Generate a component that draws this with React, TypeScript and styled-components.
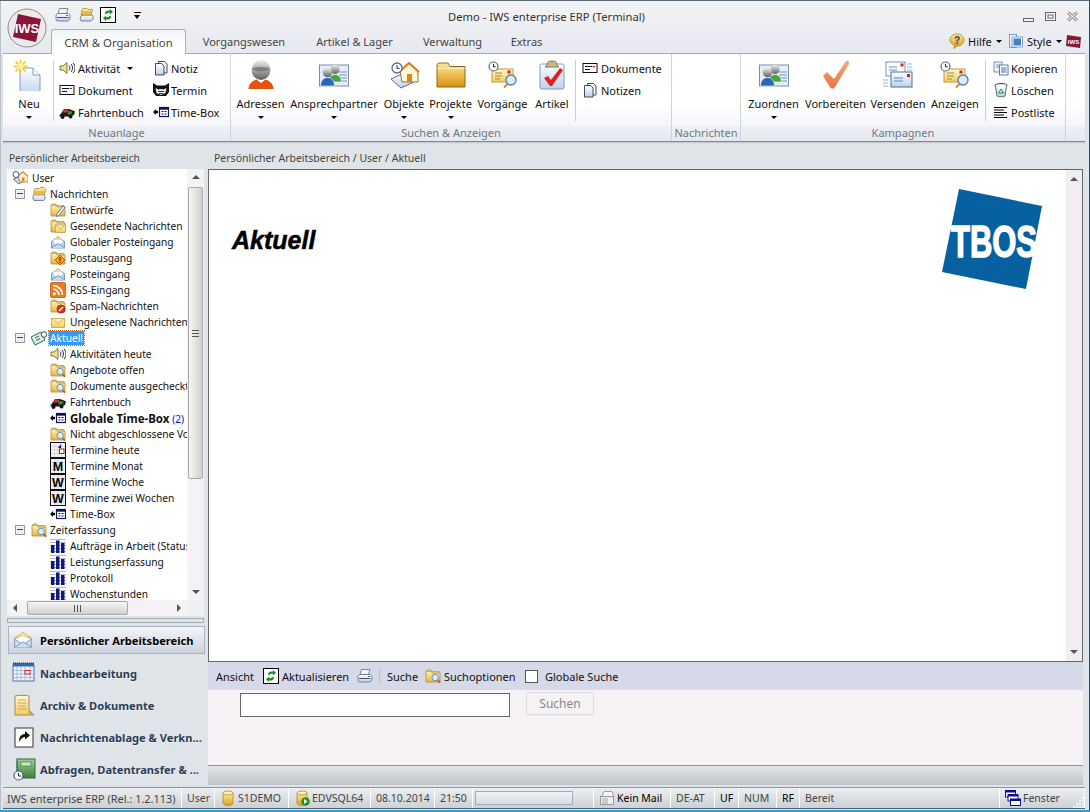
import React, { ReactNode } from "react";
import styled, { createGlobalStyle } from "styled-components";

const FONT = '"Noto Sans", "Liberation Sans", sans-serif';

const GlobalStyle = createGlobalStyle`
  html, body { margin: 0; padding: 0; overflow: hidden; background: #dfe4e8; }
  body { font-family: ${FONT}; font-size: 10.5px; color: #111; }
  * { box-sizing: border-box; }
`;

/* ---------- icons ---------- */
const S = { strokeWidth: 0.8 };
const folder = <path d="M1 5V3.2h5L7.2 5H15v9H1z" fill="url(#gFold)" stroke="#a98a3c" {...S} />;
const folderBack = <path d="M2 4V2h4l1 1.5h7V6H2z" fill="#f6e2a0" stroke="#b09a50" {...S} />;
const loupe = (
  <>
    <circle cx="10.2" cy="9.5" r="3.2" fill="#dcecfb" stroke="#6f8aa8" strokeWidth="1" />
    <path d="M12.5 12l2.6 2.8" stroke="#a8641c" strokeWidth="1.6" />
  </>
);
const env = (
  <>
    <rect x="1.5" y="4.5" width="13" height="9" fill="url(#gEnv)" stroke="#c9a040" {...S} />
    <path d="M1.5 4.5L8 9.5l6.5-5" fill="none" stroke="#d5a840" {...S} />
  </>
);
const envOpen = (
  <>
    <path d="M1.5 7.5L8 2.5l6.5 5V14h-13z" fill="#b8d0f0" stroke="#6488bc" {...S} />
    <path d="M3.5 6h9v3L8 11 3.5 9z" fill="#fff" />
    <path d="M1.5 14L8 9.5l6.5 4.5" fill="#c8daf2" stroke="#6488bc" {...S} />
    <path d="M3 6l5-3.500 5 3.500" fill="#f3d98a" />
  </>
);
const printer = (
  <>
    <path d="M4.5 1.5h8.5l-1.5 5H3z" fill="#f2f5fa" stroke="#5f6f85" {...S} />
    <path d="M2.5 6.5h11l1.5 1.5v4l-2 2H2l-1-2V8z" fill="url(#gBlue)" stroke="#5f6f85" {...S} />
    <path d="M2 10.5h11.5" stroke="#44566e" />
    <path d="M11 8.5h2.2" stroke="#3e6ea8" />
  </>
);
const arrows = (
  <>
    <path d="M5 7c0-3 2-4 5-3.500V2l3 2.800-3 2.700V6c-2-.4-3.200.2-3.500 1z" fill="#1b8f1b" />
    <path d="M11 9c0 3-2 4-5 3.500V14l-3-2.800 3-2.700V10c2 .4 3.200-.2 3.500-1z" fill="#1b8f1b" />
  </>
);
const cylinder = (
  <>
    <path d="M3 3v10c0 1.500 2.200 2.500 5 2.500s5-1 5-2.500V3z" fill="url(#gCyl)" stroke="#b48a20" {...S} />
    <ellipse cx="8" cy="3" rx="5" ry="2" fill="#fff2b8" stroke="#b48a20" {...S} />
  </>
);
const timeboxSmall = (
  <>
    <path d="M0 8l3-3v1.800h2v2.400H3V11z" fill="#000" />
    <rect x="6.500" y="3.500" width="9" height="9" fill="#fff" stroke="#10105e" strokeWidth="1.200" />
    <rect x="6.500" y="3.500" width="9" height="2.200" fill="#10105e" />
    <path d="M8.500 7.500h2M11.500 7.500h2M8.500 10h2M11.500 10h2" stroke="#10105e" />
  </>
);
const calLetter = (letter: string) => (
  <>
    <rect x=".5" y=".5" width="15" height="15" fill="#f4f4f4" stroke="#111" />
    <path d="M1 4.500h14M1 8h14M1 11.500h14M4.500 1v14M8 1v14M11.500 1v14" stroke="#c4c4c4" strokeWidth=".6" />
    <text x="8" y="13" textAnchor="middle" fontFamily="Liberation Sans" fontWeight="700" fontSize="12.500" fill="#000">{letter}</text>
  </>
);
const bars = (
  <>
    <path d="M0 1.500h16M0 4.500h16M0 7.500h16M0 10.500h16M0 13.500h16" stroke="#b8b8b8" />
    <rect x="1" y="7" width="3.500" height="8" fill="#0d1880" />
    <rect x="6" y="2.500" width="3.500" height="12.500" fill="#0d1880" />
    <rect x="11" y="5" width="3.500" height="10" fill="#0d1880" />
  </>
);
const bigPersons = (
  <>
    <rect x="1.500" y="6" width="29" height="21" fill="#e6eefa" stroke="#7c8da6" />
    <path d="M21 13h8M21 16h8M21 19h8M21 22h8" stroke="#6f93c8" />
    <circle cx="17" cy="10.500" r="4.600" fill="url(#gGray)" />
    <path d="M10.500 23c0-4.500 3-7.500 6.500-7.500s6.500 3 6.500 7.500z" fill="#43a838" stroke="#fff" strokeWidth=".6" />
    <circle cx="9.500" cy="13.500" r="4.800" fill="url(#gGray)" />
    <path d="M2.500 27c0-5.500 3.200-8.500 7-8.500s7 3 7 8.500z" fill="#2a66c0" stroke="#fff" strokeWidth=".6" />
  </>
);
const bigEnvClock = (
  <>
    <rect x="5" y="10" width="21" height="13" fill="url(#gEnv)" stroke="#c09a30" />
    <path d="M8 14h7M8 17h7M8 20h5" stroke="#a88a30" />
    <rect x="20.500" y="11.500" width="3" height="3" fill="#d02820" />
    <circle cx="24" cy="21" r="5" fill="#d8ecfb" stroke="#5f7f9f" strokeWidth="1.400" />
    <path d="M20.500 25l-3.500 3.500" stroke="#c0902c" strokeWidth="2" />
    <circle cx="6.500" cy="7.500" r="4.500" fill="#fff" stroke="#4c6a8c" strokeWidth="1.200" />
    <path d="M6.500 4.800v3h2.200" fill="none" stroke="#223" />
  </>
);

const ICONS: Record<string, [number, ReactNode]> = {
  printer: [16, printer],
  folderPrint: [16, (
    <>
      <path d="M3 9l2-1h9l1 1v3l-2 2H3l-1-2z" fill="url(#gBlue)" stroke="#5f6f85" {...S} />
      <path d="M4 3l1-1.500h4L10 2.500h4.500L13 8H3z" fill="url(#gFold)" stroke="#a98a3c" {...S} />
      <path d="M3.500 5h10" stroke="#c79a3c" {...S} />
    </>
  )],
  refresh: [16, (
    <>
      <rect x=".5" y=".5" width="15" height="15" fill="#fff" stroke="#000" />
      {arrows}
    </>
  )],
  speaker: [16, (
    <>
      <path d="M1 6h3l4-3.500v11L4 10H1z" fill="#f4e27a" stroke="#555" {...S} />
      <path d="M10 5.500c1.200 1.500 1.200 3.500 0 5M12 4c2 2.400 2 5.600 0 8M14 2.800c2.600 3 2.600 7.400 0 10.400" fill="none" stroke="#333" />
    </>
  )],
  notes: [16, (
    <>
      <path d="M5.500 1.500h6l2.500 2.500v9h-8.500z" fill="#f2f6fb" stroke="#222" {...S} />
      <path d="M2.500 3.500h6l2.500 2.500v9H2.500z" fill="url(#gBlue)" stroke="#222" {...S} />
    </>
  )],
  doc: [16, (
    <>
      <rect x="1" y="3.500" width="14" height="9" fill="#fff" stroke="#111" />
      <path d="M3 6.500h7M3 9.500h5" stroke="#111" />
      <path d="M10.500 6.500h2.500" stroke="#d01010" strokeWidth="1.200" />
    </>
  )],
  car: [16, (
    <>
      <path d="M0 12l2-2.500 3-4.500h5l4 1.500 2 1-1 3.500-4 1.500H3z" fill="#1a1a1a" />
      <path d="M5 5.500h4.500l-.5 3H3.500z" fill="#d83030" />
      <path d="M9.500 7l4 .5-1.500 3H8.500z" fill="#25a040" />
      <circle cx="3.500" cy="13" r="2" fill="#111" />
      <circle cx="11.500" cy="12.500" r="2" fill="#111" />
    </>
  )],
  cat: [16, (
    <>
      <path d="M0 1l4 2.500h8L16 1v9l-3 4H3L0 10z" fill="#111" />
      <path d="M2.500 6l3 1.500L8 7l2.500.5 3-1.500-1 5L8 13l-4.500-2z" fill="#eee" />
      <path d="M5 9.500h6M6 11.500h4" stroke="#333" />
    </>
  )],
  timebox: [16, timeboxSmall],
  star: [32, (
    <>
      <path d="M7 9h13l7 7v20H7z" fill="url(#gBlue)" stroke="#7e9cc2" />
      <path d="M20 9v7h7" fill="#fff" stroke="#7e9cc2" />
      <g stroke="#f5c518" strokeWidth="1.600">
        <path d="M7.500 .5v14M.5 7.500h14M2.500 2.500l10 10M12.500 2.500l-10 10" />
      </g>
      <circle cx="7.500" cy="7.500" r="3" fill="#fff3a0" />
    </>
  )],
  person: [32, (
    <>
      <ellipse cx="16" cy="11" rx="9.500" ry="10" fill="url(#gGray)" />
      <path d="M7 10c3-3 15-3 18 0-1 3-16 3-18 0z" fill="#5c5c5c" opacity=".55" />
      <path d="M3.500 30c0-5 4-8.500 8-9.500l4.500 3.500 4.500-3.500c4 1 8 4.500 8 9.500z" fill="#e4540e" />
    </>
  )],
  contacts: [32, bigPersons],
  houseEnv: [32, (
    <>
      <path d="M3 20l13-6 10 9-13 6z" fill="url(#gBlue)" stroke="#667" />
      <path d="M12 12l9-8 9 8v11H14z" fill="#fff6d8" stroke="#8a7440" />
      <path d="M11 13l10-9 10 9" fill="none" stroke="#d8761c" strokeWidth="2" />
      <rect x="19" y="15" width="5" height="8" fill="#d88a1c" />
      <circle cx="9" cy="9" r="5" fill="#fff" stroke="#55708f" strokeWidth="1.300" />
      <path d="M9 6v3.500h2.500" fill="none" stroke="#334" />
    </>
  )],
  folderBig: [32, (
    <>
      <path d="M2 9V5.500L4 4h9l2 3.500h15V28H2z" fill="url(#gFoldBig)" stroke="#8a6a18" />
      <path d="M2.500 9.500h27" stroke="#fff0b8" />
    </>
  )],
  envClock: [32, bigEnvClock],
  clipboard: [32, (
    <>
      <rect x="4" y="5" width="24" height="25" rx="1.500" fill="url(#gBlue)" stroke="#7e9cc2" />
      <path d="M11 6c0-3 2-4 5-4s5 1 5 4l2 2H9z" fill="#c9b98a" stroke="#8a7a50" />
      <path d="M8 19l4-2 3 4 9-12 3 2-11 16h-2z" fill="#e02020" />
    </>
  )],
  check: [32, (
    <path d="M3 17l4-4 7 7L26 2c2-1 4 1 3 3L15 28c-1 2-3 2-4.500 1z" fill="url(#gOrange)" />
  )],
  envelopes: [32, (
    <>
      <rect x="4" y="3" width="19" height="14" fill="#fff" stroke="#6f93c8" />
      <path d="M7 8h8M7 11h8" stroke="#5c88c8" />
      <rect x="18.500" y="4.500" width="3" height="3" fill="#e02010" />
      <path d="M25 5h5M25 8h5M25 11h5M25 14h5M1 21h5M1 24h5M1 27h5" stroke="#9cb4d8" />
      <rect x="9" y="13" width="21" height="15" fill="url(#gBlue)" stroke="#476ea8" />
      <path d="M12 19h9M12 22h9" stroke="#5c88c8" />
      <rect x="25" y="15" width="3" height="3" fill="#e02010" />
    </>
  )],
  copy: [16, (
    <>
      <rect x="1" y="2" width="8" height="10" fill="#eef4fc" stroke="#5678b0" {...S} />
      <rect x="6.500" y="5" width="8.500" height="10" fill="#fff" stroke="#2f5fa8" {...S} />
      <path d="M8 8h5.500M8 10h5.500M8 12h5.500" stroke="#3a6ab8" />
      <path d="M3 5h4M3 7h3" stroke="#7a96c4" />
    </>
  )],
  trash: [16, (
    <>
      <ellipse cx="8" cy="3.500" rx="6" ry="2" fill="#f0f4f8" stroke="#33425a" />
      <path d="M2.500 4l1.500 10c0 1 8 1 8 0l1.500-10" fill="url(#gBlue)" stroke="#33425a" {...S} />
      <path d="M8 7l2.500 4h-5z" fill="none" stroke="#1a9a2a" />
    </>
  )],
  list: [16, (
    <path d="M1 3.500h13M1 6h10M1 8.500h13M1 11h10M1 13.500h13" stroke="#000" />
  )],
  help: [16, (
    <>
      <path d="M8 1c4 0 7 2.500 7 6s-3 6-7 6l-3 2.500.5-3.300C2.500 11 1 9.500 1 7c0-3.500 3-6 7-6z" fill="url(#gFoldBig)" stroke="#a88a30" {...S} />
      <text x="8" y="11" textAnchor="middle" fontFamily="Liberation Sans" fontWeight="700" fontSize="10" fill="#33404f">?</text>
    </>
  )],
  style: [16, (
    <>
      <rect x="1.500" y="1.500" width="7" height="13" fill="#eef4fc" stroke="#6b8ab8" {...S} />
      <rect x="4" y="4" width="10.500" height="10" fill="#fff" stroke="#6b8ab8" {...S} />
      <rect x="5.500" y="5.500" width="7.500" height="7" fill="#3f80cc" />
    </>
  )],
  iwsSmall: [16, (
    <>
      <path d="M1 2l14 2-1 11L0 13z" fill="#8a1538" />
      <text x="7.500" y="11" textAnchor="middle" fontFamily="Liberation Sans" fontWeight="700" fontSize="6" fill="#fff">IWS</text>
    </>
  )],
  userHouse: [16, (
    <>
      <path d="M1.500 9l6-3 5 4.500-6 3.500z" fill="#c8daf2" stroke="#445" {...S} />
      <path d="M6 6l5-4 5 4v6H8z" fill="#fff0c0" stroke="#8a7440" {...S} />
      <path d="M5.500 6.500l5.500-5 5 5" fill="none" stroke="#d8761c" />
      <rect x="10" y="7.500" width="2.500" height="4" fill="#d88a1c" />
      <circle cx="4" cy="4.500" r="3" fill="#fff" stroke="#3f5a7f" />
    </>
  )],
  folderStack: [16, (
    <>
      <path d="M2 10l1-1.500h10l1 1.500v3l-1.500 1.500H3L2 13z" fill="url(#gBlue)" stroke="#5f6f85" {...S} />
      <path d="M3 5l1-2.500h4L9 1.500h4L15 4l-2 5H3z" fill="url(#gFold)" stroke="#a98a3c" {...S} />
      <path d="M3.500 6h10" stroke="#c79a3c" {...S} />
    </>
  )],
  folderPen: [16, (
    <>
      {folderBack}
      {folder}
      <path d="M7 12l6-8 2 1.500-6 8-2.500 1z" fill="#fff" stroke="#2f5fa8" {...S} />
    </>
  )],
  folderEnv: [16, (
    <>
      {folderBack}
      {folder}
      <rect x="5.500" y="7" width="10" height="7.500" fill="url(#gEnv)" stroke="#c9a040" {...S} />
      <path d="M5.500 7l5 4 5-4" fill="none" stroke="#c9a040" {...S} />
    </>
  )],
  envOpen: [16, envOpen],
  folderWarn: [16, (
    <>
      {folderBack}
      {folder}
      <path d="M10 5l5 5-5 5-5-5z" fill="#f0a010" stroke="#a06010" {...S} />
      <path d="M10 7v4M10 12v1" stroke="#c01010" strokeWidth="1.300" />
    </>
  )],
  rss: [16, (
    <>
      <rect x=".5" y=".5" width="15" height="15" rx="1.500" fill="#f07a18" stroke="#c05a10" {...S} />
      <circle cx="4.200" cy="11.800" r="1.600" fill="#fff" />
      <path d="M3 7c3.200 0 6 2.800 6 6M3 3.500c5.200 0 9.500 4.300 9.500 9.500" fill="none" stroke="#fff" strokeWidth="1.700" />
    </>
  )],
  folderBan: [16, (
    <>
      {folderBack}
      {folder}
      <circle cx="11" cy="11" r="4" fill="#e03020" stroke="#a01810" {...S} />
      <path d="M8.800 13l4.400-4" stroke="#fff" strokeWidth="1.300" />
    </>
  )],
  env: [16, env],
  keyCard: [16, (
    <>
      <path d="M0 7l10-5 4 8-10 5z" fill="#d8eee6" stroke="#1f6a5a" strokeWidth="1" />
      <path d="M4 8l4-2M5 10.500l4-2" stroke="#333" {...S} />
      <circle cx="13" cy="4.500" r="2.800" fill="#eee" stroke="#555" />
    </>
  )],
  folderSearch: [16, (
    <>
      {folderBack}
      {folder}
      {loupe}
    </>
  )],
  calToday: [16, (
    <>
      <rect x=".5" y=".5" width="15" height="15" fill="#f4f4f4" stroke="#111" />
      <path d="M1 4.500h14M1 8h14M1 11.500h14M4.500 1v14M8 1v14M11.500 1v14" stroke="#c4c4c4" strokeWidth=".6" />
      <path d="M8 6l3-4v4z" fill="#10108a" />
      <rect x="9.500" y="7" width="4.500" height="4.500" fill="#fff" stroke="#c01010" />
    </>
  )],
  calM: [16, calLetter("M")],
  calW: [16, calLetter("W")],
  bars: [16, bars],
  navEnv: [24, (
    <>
      <path d="M2 10L12 3l10 7v11H2z" fill="url(#gBlue)" stroke="#6f8fbc" />
      <path d="M5 9l7-5 7 5v3l-7 4-7-4z" fill="#fff" />
      <path d="M3 8.500L12 3l9 5.500-2 1.500-7-4-7 4z" fill="url(#gEnv)" stroke="#d0a040" strokeWidth=".6" />
      <path d="M2 21l10-7 10 7" fill="#cfdff2" stroke="#6f8fbc" />
      <path d="M2 11l7 5M22 11l-7 5" stroke="#6f8fbc" />
    </>
  )],
  navCal: [24, (
    <>
      <rect x="1" y="4" width="21" height="16" fill="#f0f5fc" stroke="#4a74b0" />
      <rect x="1" y="2" width="21" height="3.500" fill="#2f66b8" />
      <path d="M1 2h21" stroke="#333" strokeDasharray="1 1" />
      <path d="M1 9.500h21M1 13h21M1 16.500h21M5 5v15M9 5v15M13 5v15M18 5v15" stroke="#8aa8d4" strokeWidth=".7" />
      <rect x="13" y="9.500" width="5" height="3.500" fill="#fff" stroke="#e02010" />
    </>
  )],
  navNote: [24, (
    <>
      <path d="M3 3c3-1 11-1 14 0v14l5 5H3z" fill="url(#gEnv)" stroke="#a48a50" />
      <path d="M6 7h8M6 10h9M6 13h8M6 16h9" stroke="#c4a860" />
      <path d="M17 17l5 5h-6z" fill="#c8a860" />
    </>
  )],
  navShortcut: [24, (
    <>
      <rect x="3" y="3" width="18" height="19" fill="#fff" stroke="#333" />
      <path d="M7 17c0-6 3-8 6-8V6l5 4.500-5 4v-2.500c-2 0-4 1.500-6 5z" fill="#111" />
    </>
  )],
  navBook: [24, (
    <>
      <rect x="5" y="2" width="18" height="19" fill="url(#gGreen)" stroke="#2e6a40" />
      <rect x="9" y="5" width="10" height="4" fill="#cfe8c4" stroke="#2e6a40" strokeWidth=".6" />
      <path d="M5 4v15" stroke="#333" strokeWidth="1" strokeDasharray="1 1" />
      <circle cx="6.500" cy="18.500" r="4.500" fill="#fff" stroke="#3f5f88" strokeWidth="1.200" />
      <path d="M6.500 16v3h2.500" fill="none" stroke="#223" />
    </>
  )],
  cyl: [16, cylinder],
  cylPlay: [16, (
    <>
      {cylinder}
      <circle cx="11.500" cy="11.500" r="4.300" fill="#2e8b2e" />
      <path d="M10 9l3.500 2.500L10 14z" fill="#fff" />
    </>
  )],
  printerMail: [16, (
    <>
      <path d="M5 1.500h8l2 5H3z" fill="#f6f6f8" stroke="#888" {...S} />
      <rect x="1.500" y="6.500" width="13" height="8" fill="#eee" stroke="#888" {...S} />
      <path d="M3 9h6M3 11h6M3 13h6" stroke="#aaa" />
    </>
  )],
  windows: [16, (
    <>
      <rect x=".5" y=".5" width="10" height="6.500" fill="#fff" stroke="#10108a" />
      <rect x=".5" y=".5" width="10" height="2" fill="#10108a" />
      <rect x="3" y="4.500" width="10" height="6.500" fill="#fff" stroke="#10108a" />
      <rect x="3" y="4.500" width="10" height="2" fill="#10108a" />
      <rect x="5.500" y="9" width="10" height="6.500" fill="#fff" stroke="#10108a" />
      <rect x="5.500" y="9" width="10" height="2" fill="#10108a" />
    </>
  )],
};

const Glyph = styled.svg<{ $s: number }>`
  width: ${(p) => p.$s}px;
  height: ${(p) => p.$s}px;
  flex: none;
  display: block;
`;

const Icon = ({ n, s }: { n: string; s?: number }) => {
  const [vb, content] = ICONS[n];
  return (
    <Glyph $s={s ?? vb} viewBox={`0 0 ${vb} ${vb}`}>
      {content}
    </Glyph>
  );
};

const Defs = styled.svg`
  position: absolute;
  width: 0;
  height: 0;
`;

const Grad = ({ id, a, b }: { id: string; a: string; b: string }) => (
  <linearGradient id={id} x1="0" y1="0" x2="0" y2="1">
    <stop offset="0" stopColor={a} />
    <stop offset="1" stopColor={b} />
  </linearGradient>
);

/* ---------- shell ---------- */
const Window = styled.div`
  position: relative;
  width: 1090px;
  height: 812px;
  display: flex;
  flex-direction: column;
  padding: 0 5px 1px 3px;
  overflow: hidden;
  background: linear-gradient(#f3f3f4 0, #eceef2 30px, #e6e8f1 53px, #dfe4e8 54px);
  border-top: 1px solid #5b6770;
  border-bottom: 2px solid #2e9fd2;
  box-shadow: inset -1px 0 0 #1f4f78, inset 1px 0 0 #b8c0c8;
`;

const LogoBadge = styled.div`
  position: absolute;
  left: 7px;
  top: 7px;
  width: 40px;
  height: 40px;
  z-index: 3;
`;

const TitleBar = styled.div`
  height: 28px;
  flex: none;
  margin-right: -5px;
  display: grid;
  grid-template-columns: 1fr auto 1fr;
  align-items: center;
`;

const QuickTools = styled.div`
  display: flex;
  align-items: center;
  padding-left: 52px;
  gap: 6.500px;
`;

const QuickCaret = styled.span`
  margin-left: 11px;
  width: 7px;
  height: 6px;
  border-top: 1px solid #000;
  position: relative;
  &::after {
    content: "";
    position: absolute;
    left: 0;
    top: 2px;
    border: 3.5px solid transparent;
    border-top: 4px solid #000;
    border-bottom: 0;
  }
`;

const WindowTitle = styled.div`
  font-size: 11.2px;
  color: #333;
  padding-top: 2px;
`;

const WindowButtons = styled.div`
  display: flex;
  justify-content: flex-end;
  align-items: center;
  gap: 11px;
  padding: 2px 12px 0 0;
`;

const WinGlyph = styled.svg`
  width: 11px;
  height: 11px;
  display: block;
`;

const TabRow = styled.div`
  height: 24px;
  flex: none;
  display: flex;
  align-items: stretch;
  padding-left: 48px;
  position: relative;
`;

const Tab = styled.div<{ $active?: boolean; $w: number }>`
  width: ${(p) => p.$w}px;
  font-size: ${(p) => (p.$active ? "11.4px" : "11px")};
  color: #444;
  display: flex;
  align-items: center;
  justify-content: center;
  height: ${(p) => (p.$active ? "25px" : "24px")};
  position: relative;
  z-index: 2;
  ${(p) =>
    p.$active
      ? `background: linear-gradient(#f2f3f6, #fff 60%);
         border: 1px solid #a9b0b8;
         border-bottom: 0;
         border-radius: 3px 3px 0 0;`
      : ""}
`;

const TabRight = styled.div`
  margin-left: auto;
  display: flex;
  align-items: center;
  padding-right: 3px;
  font-size: 11px;
  color: #111;
`;

const HelpItem = styled.span<{ $w: number }>`
  width: ${(p) => p.$w}px;
  display: flex;
  align-items: center;
  gap: 3px;
`;

const Caret = styled.span<{ $color?: string }>`
  display: inline-block;
  width: 0;
  height: 0;
  border: 3px solid transparent;
  border-top: 3px solid ${(p) => p.$color ?? "#000"};
  border-bottom: 0;
  flex: none;
`;

/* ---------- ribbon ---------- */
const Ribbon = styled.div`
  height: 89px;
  display: flex;
  background: linear-gradient(#fff 0, #fff 50px, #f5f5fa 72px, #edeff4 73px, #e4e8ec 88px);
  border-top: 1px solid #a4adb6;
  border-bottom: 1px solid #7e8993;
  box-shadow: 0 1px 1px #c4cad0;
  flex: none;
`;

const Group = styled.div<{ $w: number }>`
  width: ${(p) => p.$w}px;
  flex: none;
  display: flex;
  flex-direction: column;
  border-right: 1px solid #cfd4d9;
`;

const GroupFiller = styled.div`
  flex: 1;
`;

const GroupBody = styled.div<{ $pl?: number }>`
  height: 71px;
  display: flex;
  padding-top: 3px;
  padding-left: ${(p) => p.$pl ?? 0}px;
`;

const GroupLabel = styled.div`
  flex: 1;
  display: flex;
  align-items: center;
  justify-content: center;
  padding-bottom: 1px;
  font-size: 11px;
  color: #6c7885;
`;

const LargeButton = styled.div<{ $w: number }>`
  width: ${(p) => p.$w}px;
  flex: none;
  display: flex;
  flex-direction: column;
  align-items: center;
`;

const LargeIcon = styled.div`
  height: 36px;
  display: flex;
  align-items: center;
`;

const LargeText = styled.div`
  height: 20px;
  line-height: 21px;
  font-size: 11px;
  white-space: nowrap;
`;

const LargeCaret = styled.div`
  height: 9px;
  display: flex;
  align-items: center;
`;

const Separator = styled.div<{ $ml?: number }>`
  width: 1px;
  height: 61px;
  margin-top: 3px;
  margin-left: ${(p) => p.$ml ?? 0}px;
  background: #c9ced3;
  flex: none;
`;

const SmallColumn = styled.div<{ $w: number; $ml?: number }>`
  width: ${(p) => p.$w}px;
  margin-left: ${(p) => p.$ml ?? 0}px;
  flex: none;
  display: flex;
  flex-direction: column;
`;

const SmallButton = styled.div<{ $gap?: number }>`
  height: 22px;
  display: flex;
  align-items: center;
  gap: ${(p) => p.$gap ?? 3}px;
  font-size: 11px;
  white-space: nowrap;
  padding-left: 1px;
`;

/* ---------- main ---------- */
const Main = styled.div`
  height: 636px;
  margin-top: 8px;
  display: flex;
  padding-right: 2px;
  flex: none;
`;

const LeftColumn = styled.div`
  width: 205px;
  flex: none;
  display: flex;
  flex-direction: column;
`;

const PaneHeading = styled.div<{ $h: number; $pl: number; $fs: number; $pb: number }>`
  height: ${(p) => p.$h}px;
  padding-left: ${(p) => p.$pl}px;
  padding-bottom: ${(p) => p.$pb}px;
  font-size: ${(p) => p.$fs}px;
  color: #444;
  display: flex;
  align-items: center;
  flex: none;
`;

const TreeFrame = styled.div`
  margin: 2px 0 0 4px;
  width: 197px;
  height: 447px;
  display: grid;
  grid-template-columns: 180px 17px;
  grid-template-rows: 431px 16px;
  background: #fff;
  flex: none;
`;

const TreeList = styled.div`
  overflow: hidden;
  padding-top: 1px;
`;

const TreeRow = styled.div<{ $pl: number; $gap: number }>`
  height: 16px;
  display: flex;
  align-items: center;
  gap: ${(p) => p.$gap}px;
  padding-left: ${(p) => p.$pl}px;
  font-size: 10.2px;
  white-space: nowrap;
  color: #111;
`;

const Expander = styled.span`
  width: 10px;
  height: 10px;
  flex: none;
  margin-right: 3px;
  border: 1px solid #8f9aa8;
  background: #eef1f4;
  position: relative;
  &::after {
    content: "";
    position: absolute;
    left: 1px;
    right: 1px;
    top: 3px;
    height: 1px;
    background: #2a4a8a;
  }
`;

const TreeLabel = styled.span<{ $sel?: boolean; $bold?: boolean }>`
  font-weight: ${(p) => (p.$bold ? 700 : 400)};
  font-size: ${(p) => (p.$bold ? "11.500px" : "inherit")};
  ${(p) =>
    p.$sel
      ? `background: #3399ff; color: #fff; outline: 1px dotted #c86a10; padding: 0 1px; margin-left: -1px; line-height: 14px;`
      : ""}
`;

const Count = styled.span`
  color: #1010d0;
  font-weight: 400;
  font-size: 10.2px;
`;

const VScroll = styled.div<{ $bg?: string; $w: number }>`
  width: ${(p) => p.$w}px;
  display: flex;
  flex-direction: column;
  align-items: stretch;
  background: ${(p) => p.$bg ?? "#f5f2f5"};
`;

const ArrowCell = styled.div<{ $size?: number }>`
  height: ${(p) => p.$size ?? 16}px;
  flex: none;
  display: flex;
  align-items: center;
  justify-content: center;
`;

const Tri = styled.span<{ $dir: "up" | "down" | "left" | "right" }>`
  width: 0;
  height: 0;
  border: 4px solid transparent;
  ${(p) =>
    p.$dir === "up"
      ? "border-top: 0; border-bottom-color: #555;"
      : p.$dir === "down"
      ? "border-bottom: 0; border-top-color: #555;"
      : p.$dir === "left"
      ? "border-left: 0; border-right-color: #555;"
      : "border-right: 0; border-left-color: #555;"}
`;

const VThumb = styled.div`
  height: 292px;
  margin: 2px 1px 0 1px;
  background: linear-gradient(90deg, #f6f6f6, #d0d0d0);
  border: 1px solid #a8a8a8;
  border-radius: 2px;
  display: flex;
  align-items: center;
  justify-content: center;
  flex: none;
`;

const Spacer = styled.div`
  flex: 1;
`;

const VGrip = styled.div`
  width: 7px;
  height: 7px;
  background: repeating-linear-gradient(#555 0 1px, transparent 1px 3px);
`;

const HScroll = styled.div`
  display: flex;
  align-items: stretch;
  background: #f5f2f5;
`;

const HArrow = styled.div`
  width: 16px;
  flex: none;
  display: flex;
  align-items: center;
  justify-content: center;
`;

const HThumb = styled.div`
  width: 101px;
  margin: 1px 0 1px 4px;
  background: linear-gradient(#f6f6f6, #d0d0d0);
  border: 1px solid #a8a8a8;
  border-radius: 2px;
  display: flex;
  align-items: center;
  justify-content: center;
`;

const HGrip = styled.div`
  width: 7px;
  height: 7px;
  background: repeating-linear-gradient(90deg, #555 0 1px, transparent 1px 3px);
`;

const ScrollCorner = styled.div`
  background: #eef0f2;
`;

const PaneSplit = styled.div`
  margin: 2px 4px 0 4px;
  width: 197px;
  height: 5px;
  border: 1px solid #a6adb5;
  flex: none;
`;

const NavList = styled.div`
  margin-top: 2px;
  display: flex;
  flex-direction: column;
`;

const NavItem = styled.div<{ $active?: boolean }>`
  height: 32px;
  flex: none;
  display: flex;
  align-items: center;
  padding-left: 9px;
  gap: 4px;
  font-size: 11.100px;
  font-weight: 700;
  white-space: nowrap;
  overflow: hidden;
  color: ${(p) => (p.$active ? "#000" : "#2c3c58")};
  ${(p) =>
    p.$active
      ? `margin: 1px 4px 3px 5px; height: 28px; width: 197px; padding-left: 4px; gap: 7px;
         background: linear-gradient(#f4f5f8, #ccd3de);
         border: 1px solid #a9b2c0;`
      : ""}
`;

const NavText = styled.span`
  text-shadow: 0 1px 0 rgba(255, 255, 255, 0.55);
`;

const RightColumn = styled.div`
  flex: 1;
  min-width: 0;
  display: flex;
  flex-direction: column;
`;

const ContentBox = styled.div`
  height: 493px;
  display: flex;
  border: 1px solid #666;
  background: #fff;
  flex: none;
`;

const ContentMain = styled.div`
  flex: 1;
  display: flex;
  justify-content: space-between;
  align-items: flex-start;
  padding: 19px 24px 0 23px;
`;

const PageTitle = styled.h1`
  margin: 37px 0 0;
  font: italic 700 25px "Liberation Sans", sans-serif;
  line-height: 28px;
  color: #000;
  -webkit-text-stroke: 0.5px #000;
`;

const TbosLogo = styled.svg`
  width: 100px;
  height: 100px;
  display: block;
  flex: none;
`;

const Toolbar = styled.div`
  height: 28px;
  display: flex;
  align-items: center;
  padding-left: 8px;
  background: #d6d9e8;
  font-size: 11px;
  flex: none;
`;

const ToolItem = styled.div<{ $w: number }>`
  width: ${(p) => p.$w}px;
  flex: none;
  display: flex;
  align-items: center;
  white-space: nowrap;
`;

const ToolSep = styled.div`
  width: 1px;
  height: 14px;
  background: #b8bccb;
  margin: 0 7px 0 6px;
  flex: none;
`;

const CheckBox = styled.span`
  width: 13px;
  height: 13px;
  border: 1px solid #555;
  background: #fff;
  display: block;
`;

const SearchPanel = styled.div`
  height: 75px;
  display: flex;
  align-items: flex-start;
  padding: 3px 0 0 32px;
  background: #f6f2f6;
  flex: none;
`;

const SearchInput = styled.div`
  width: 270px;
  height: 24px;
  background: #fff;
  border: 1px solid #666;
`;

const SearchButton = styled.div`
  width: 68px;
  height: 23px;
  margin: -1px 0 0 16px;
  border: 1px solid #dcdcdc;
  border-radius: 3px;
  color: #888;
  font-size: 12px;
  display: flex;
  align-items: center;
  justify-content: center;
`;

const BottomStrip = styled.div`
  height: 20px;
  border-top: 1px solid #8d949b;
  background: linear-gradient(#e1e4e8, #bfc4c9);
  flex: none;
`;

/* ---------- status ---------- */
const StatusBar = styled.div`
  height: 22px;
  margin-top: 1px;
  display: flex;
  align-items: stretch;
  border-top: 1px solid #8d949b;
  border-bottom: 1px solid #555f6a;
  background: linear-gradient(#eceef1, #ccd1d6);
  flex: none;
`;

const StatusCell = styled.div<{ $w?: number; $pl?: number; $dark?: boolean; $fs?: number }>`
  ${(p) => (p.$w ? `width: ${p.$w}px; flex: none;` : "flex: 1;")}
  padding-left: ${(p) => p.$pl ?? 5}px;
  display: flex;
  align-items: center;
  gap: 2px;
  font-size: ${(p) => p.$fs ?? 10.5}px;
  white-space: nowrap;
  overflow: hidden;
  color: ${(p) => (p.$dark ? "#000" : "#444")};
  border-right: 1px solid #fdfdfd;
`;

const Progress = styled.div`
  width: 98px;
  height: 14px;
  border: 1px solid #a4acb6;
  background: linear-gradient(#f0f3f7, #d4dbe4);
`;

const ResizeGrip = styled.svg`
  width: 11px;
  height: 11px;
  margin-left: auto;
  align-self: flex-end;
  flex: none;
`;

/* ---------- data ---------- */
type Node = { t: string; i: string; lvl: 0 | 1 | 2; sel?: boolean; bold?: boolean; count?: string };
const tree: Node[] = [
  { t: "User", i: "userHouse", lvl: 0 },
  { t: "Nachrichten", i: "folderStack", lvl: 1 },
  { t: "Entwürfe", i: "folderPen", lvl: 2 },
  { t: "Gesendete Nachrichten", i: "folderEnv", lvl: 2 },
  { t: "Globaler Posteingang", i: "envOpen", lvl: 2 },
  { t: "Postausgang", i: "folderWarn", lvl: 2 },
  { t: "Posteingang", i: "envOpen", lvl: 2 },
  { t: "RSS-Eingang", i: "rss", lvl: 2 },
  { t: "Spam-Nachrichten", i: "folderBan", lvl: 2 },
  { t: "Ungelesene Nachrichten", i: "env", lvl: 2 },
  { t: "Aktuell", i: "keyCard", lvl: 1, sel: true },
  { t: "Aktivitäten heute", i: "speaker", lvl: 2 },
  { t: "Angebote offen", i: "folderSearch", lvl: 2 },
  { t: "Dokumente ausgecheckt", i: "folderSearch", lvl: 2 },
  { t: "Fahrtenbuch", i: "car", lvl: 2 },
  { t: "Globale Time-Box", i: "timebox", lvl: 2, bold: true, count: "(2)" },
  { t: "Nicht abgeschlossene Vorgänge", i: "folderSearch", lvl: 2 },
  { t: "Termine heute", i: "calToday", lvl: 2 },
  { t: "Termine Monat", i: "calM", lvl: 2 },
  { t: "Termine Woche", i: "calW", lvl: 2 },
  { t: "Termine zwei Wochen", i: "calW", lvl: 2 },
  { t: "Time-Box", i: "timebox", lvl: 2 },
  { t: "Zeiterfassung", i: "folderSearch", lvl: 1 },
  { t: "Aufträge in Arbeit (Status)", i: "bars", lvl: 2 },
  { t: "Leistungserfassung", i: "bars", lvl: 2 },
  { t: "Protokoll", i: "bars", lvl: 2 },
  { t: "Wochenstunden", i: "bars", lvl: 2 },
];
const LEVEL_PAD = [5, 8, 43];
const LEVEL_GAP = [4, 3, 4];

const nav = [
  { t: "Persönlicher Arbeitsbereich", i: "navEnv", active: true },
  { t: "Nachbearbeitung", i: "navCal" },
  { t: "Archiv & Dokumente", i: "navNote" },
  { t: "Nachrichtenablage & Verkn...", i: "navShortcut" },
  { t: "Abfragen, Datentransfer & ...", i: "navBook" },
];

const Big = ({ w, icon, label, caret }: { w: number; icon: string; label: string; caret?: boolean }) => (
  <LargeButton $w={w}>
    <LargeIcon>
      <Icon n={icon} />
    </LargeIcon>
    <LargeText>{label}</LargeText>
    <LargeCaret>{caret && <Caret />}</LargeCaret>
  </LargeButton>
);

const Small = ({ icon, label, caret, gap }: { icon: string; label: string; caret?: boolean; gap?: number }) => (
  <SmallButton $gap={gap}>
    <Icon n={icon} />
    {label}
    {caret && <Caret style={{ marginLeft: 4 }} />}
  </SmallButton>
);

export default function App() {
  return (
    <Window>
      <GlobalStyle />
      <Defs>
        <defs>
          <Grad id="gFold" a="#fff2b4" b="#e9b63c" />
          <Grad id="gFoldBig" a="#ffe79a" b="#d8930c" />
          <Grad id="gEnv" a="#fff8d2" b="#f3cc5c" />
          <Grad id="gBlue" a="#ffffff" b="#bcd2ee" />
          <Grad id="gGray" a="#efefef" b="#5e5e5e" />
          <Grad id="gCyl" a="#fff0a0" b="#d8a020" />
          <Grad id="gGreen" a="#9fd08a" b="#3a7d40" />
          <Grad id="gOrange" a="#f7a77a" b="#e8763e" />
        </defs>
      </Defs>

      <LogoBadge>
        <svg viewBox="0 0 40 40" width="40" height="40">
          <circle cx="20" cy="20" r="19" fill="#eceaea" stroke="#8c8c8c" />
          <path d="M11 6l23 5-5 23-23-5z" fill="#8a1538" />
          <text x="20" y="25" textAnchor="middle" fontFamily="Liberation Sans" fontWeight="700" fontSize="13" fill="#fff">IWS</text>
        </svg>
      </LogoBadge>

      <TitleBar>
        <QuickTools>
          <Icon n="printer" />
          <Icon n="folderPrint" />
          <Icon n="refresh" />
          <QuickCaret />
        </QuickTools>
        <WindowTitle>Demo - IWS enterprise ERP (Terminal)</WindowTitle>
        <WindowButtons>
          <WinGlyph viewBox="0 0 11 11">
            <rect x=".5" y="7.500" width="10" height="3" fill="#f4f4f4" stroke="#667" />
          </WinGlyph>
          <WinGlyph viewBox="0 0 11 11">
            <rect x=".5" y="1.500" width="10" height="8" fill="#f4f4f4" stroke="#667" />
            <rect x="3" y="4" width="5" height="3" fill="#fff" stroke="#667" />
          </WinGlyph>
          <WinGlyph viewBox="0 0 11 11">
            <path d="M1 1.500l9 8M10 1.500l-9 8" stroke="#667" strokeWidth="3" />
            <path d="M1 1.500l9 8M10 1.500l-9 8" stroke="#f4f4f4" strokeWidth="1.200" />
          </WinGlyph>
        </WindowButtons>
      </TitleBar>

      <TabRow>
        <Tab $active $w={135}>CRM & Organisation</Tab>
        <Tab $w={116}>Vorgangswesen</Tab>
        <Tab $w={105}>Artikel & Lager</Tab>
        <Tab $w={91}>Verwaltung</Tab>
        <Tab $w={57}>Extras</Tab>
        <TabRight>
          <HelpItem $w={59}>
            <Icon n="help" />
            Hilfe
            <Caret style={{ marginLeft: 1 }} />
          </HelpItem>
          <HelpItem $w={58}>
            <Icon n="style" />
            Style
            <Caret style={{ marginLeft: 1 }} />
          </HelpItem>
          <Icon n="iwsSmall" />
        </TabRight>
      </TabRow>

      <Ribbon>
        <Group $w={228}>
          <GroupBody $pl={2}>
            <Big w={48} icon="star" label="Neu" caret />
            <Separator />
            <SmallColumn $w={94} $ml={4}>
              <Small icon="speaker" label="Aktivität" caret />
              <Small icon="doc" label="Dokument" />
              <Small icon="car" label="Fahrtenbuch" />
            </SmallColumn>
            <SmallColumn $w={76}>
              <Small icon="notes" label="Notiz" gap={2} />
              <Small icon="cat" label="Termin" gap={2} />
              <Small icon="timebox" label="Time-Box" gap={2} />
            </SmallColumn>
          </GroupBody>
          <GroupLabel>Neuanlage</GroupLabel>
        </Group>
        <Group $w={441}>
          <GroupBody $pl={3}>
            <Big w={53} icon="person" label="Adressen" caret />
            <Big w={94} icon="contacts" label="Ansprechpartner" caret />
            <Big w={46} icon="houseEnv" label="Objekte" caret />
            <Big w={47} icon="folderBig" label="Projekte" caret />
            <Big w={57} icon="envClock" label="Vorgänge" />
            <Big w={42} icon="clipboard" label="Artikel" />
            <Separator $ml={2} />
            <SmallColumn $w={90} $ml={5}>
              <Small icon="doc" label="Dokumente" />
              <Small icon="notes" label="Notizen" />
            </SmallColumn>
          </GroupBody>
          <GroupLabel>Suchen & Anzeigen</GroupLabel>
        </Group>
        <Group $w={69}>
          <GroupBody />
          <GroupLabel>Nachrichten</GroupLabel>
        </Group>
        <Group $w={325}>
          <GroupBody $pl={4}>
            <Big w={57} icon="contacts" label="Zuordnen" caret />
            <Big w={67} icon="check" label="Vorbereiten" />
            <Big w={58} icon="envelopes" label="Versenden" />
            <Big w={56} icon="envClock" label="Anzeigen" />
            <Separator $ml={2} />
            <SmallColumn $w={72} $ml={6}>
              <Small icon="copy" label="Kopieren" gap={2} />
              <Small icon="trash" label="Löschen" gap={2} />
              <Small icon="list" label="Postliste" gap={2} />
            </SmallColumn>
          </GroupBody>
          <GroupLabel>Kampagnen</GroupLabel>
        </Group>
        <GroupFiller />
      </Ribbon>

      <Main>
        <LeftColumn>
          <PaneHeading $h={17} $pl={6} $fs={10.1} $pb={2}>Persönlicher Arbeitsbereich</PaneHeading>
          <TreeFrame>
            <TreeList>
              {tree.map((n) => (
                <TreeRow key={n.t} $pl={LEVEL_PAD[n.lvl]} $gap={LEVEL_GAP[n.lvl]}>
                  {n.lvl === 1 && <Expander />}
                  <Icon n={n.i} />
                  <TreeLabel $sel={n.sel} $bold={n.bold}>
                    {n.t}
                    {n.count && <Count> {n.count}</Count>}
                  </TreeLabel>
                </TreeRow>
              ))}
            </TreeList>
            <VScroll $w={17}>
              <ArrowCell><Tri $dir="up" /></ArrowCell>
              <VThumb><VGrip /></VThumb>
              <Spacer />
              <ArrowCell><Tri $dir="down" /></ArrowCell>
            </VScroll>
            <HScroll>
              <HArrow><Tri $dir="left" /></HArrow>
              <HThumb><HGrip /></HThumb>
              <Spacer />
              <HArrow><Tri $dir="right" /></HArrow>
            </HScroll>
            <ScrollCorner />
          </TreeFrame>
          <PaneSplit />
          <NavList>
            {nav.map((n) => (
              <NavItem key={n.t} $active={n.active}>
                <Icon n={n.i} s={n.active ? 20 : 24} />
                <NavText>{n.t}</NavText>
              </NavItem>
            ))}
          </NavList>
        </LeftColumn>

        <RightColumn>
          <PaneHeading $h={19} $pl={6} $fs={10.500} $pb={3}>Persönlicher Arbeitsbereich / User / Aktuell</PaneHeading>
          <ContentBox>
            <ContentMain>
              <PageTitle>Aktuell</PageTitle>
              <TbosLogo viewBox="0 0 100 100">
                <path d="M17 0l83 17-16 83L0 83z" fill="#07609f" />
                <text x="9" y="68" fontFamily="Liberation Sans" fontWeight="700" fontSize="45" fill="#fff" stroke="#fff" strokeWidth="1.500" textLength="86" lengthAdjust="spacingAndGlyphs">TBOS</text>
              </TbosLogo>
            </ContentMain>
            <VScroll $w={16} $bg="#f1edf1">
              <ArrowCell $size={18}><Tri $dir="up" /></ArrowCell>
              <Spacer />
              <ArrowCell $size={18}><Tri $dir="down" /></ArrowCell>
            </VScroll>
          </ContentBox>
          <Toolbar>
            <ToolItem $w={47}>Ansicht</ToolItem>
            <ToolItem $w={19}><Icon n="refresh" /></ToolItem>
            <ToolItem $w={75}>Aktualisieren</ToolItem>
            <ToolItem $w={16}><Icon n="printer" /></ToolItem>
            <ToolSep />
            <ToolItem $w={38}>Suche</ToolItem>
            <ToolItem $w={19}><Icon n="folderSearch" /></ToolItem>
            <ToolItem $w={81}>Suchoptionen</ToolItem>
            <ToolItem $w={20}><CheckBox /></ToolItem>
            <ToolItem $w={80}>Globale Suche</ToolItem>
          </Toolbar>
          <SearchPanel>
            <SearchInput />
            <SearchButton>Suchen</SearchButton>
          </SearchPanel>
          <BottomStrip />
        </RightColumn>
      </Main>

      <StatusBar>
        <StatusCell $w={179} $pl={4} $fs={10.900}>IWS enterprise ERP (Rel.: 1.2.113)</StatusCell>
        <StatusCell $w={33}>User</StatusCell>
        <StatusCell $w={74} $pl={5}><Icon n="cyl" />S1DEMO</StatusCell>
        <StatusCell $w={82} $pl={5}><Icon n="cylPlay" />EDVSQL64</StatusCell>
        <StatusCell $w={64}>08.10.2014</StatusCell>
        <StatusCell $w={38}>21:50</StatusCell>
        <StatusCell $w={121} $pl={2}><Progress /></StatusCell>
        <StatusCell $w={77} $pl={5} $dark><Icon n="printerMail" />Kein Mail</StatusCell>
        <StatusCell $w={44}>DE-AT</StatusCell>
        <StatusCell $w={24} $dark>UF</StatusCell>
        <StatusCell $w={38}>NUM</StatusCell>
        <StatusCell $w={23} $dark>RF</StatusCell>
        <StatusCell $w={200}>Bereit</StatusCell>
        <StatusCell>
          <Icon n="windows" />
          Fenster
          <ResizeGrip viewBox="0 0 11 11">
            <path d="M9 1h2M6 4h2M9 4h2M3 7h2M6 7h2M9 7h2M0 10h2M3 10h2M6 10h2M9 10h2" stroke="#fff" strokeWidth="1.500" />
          </ResizeGrip>
        </StatusCell>
      </StatusBar>
    </Window>
  );
}
